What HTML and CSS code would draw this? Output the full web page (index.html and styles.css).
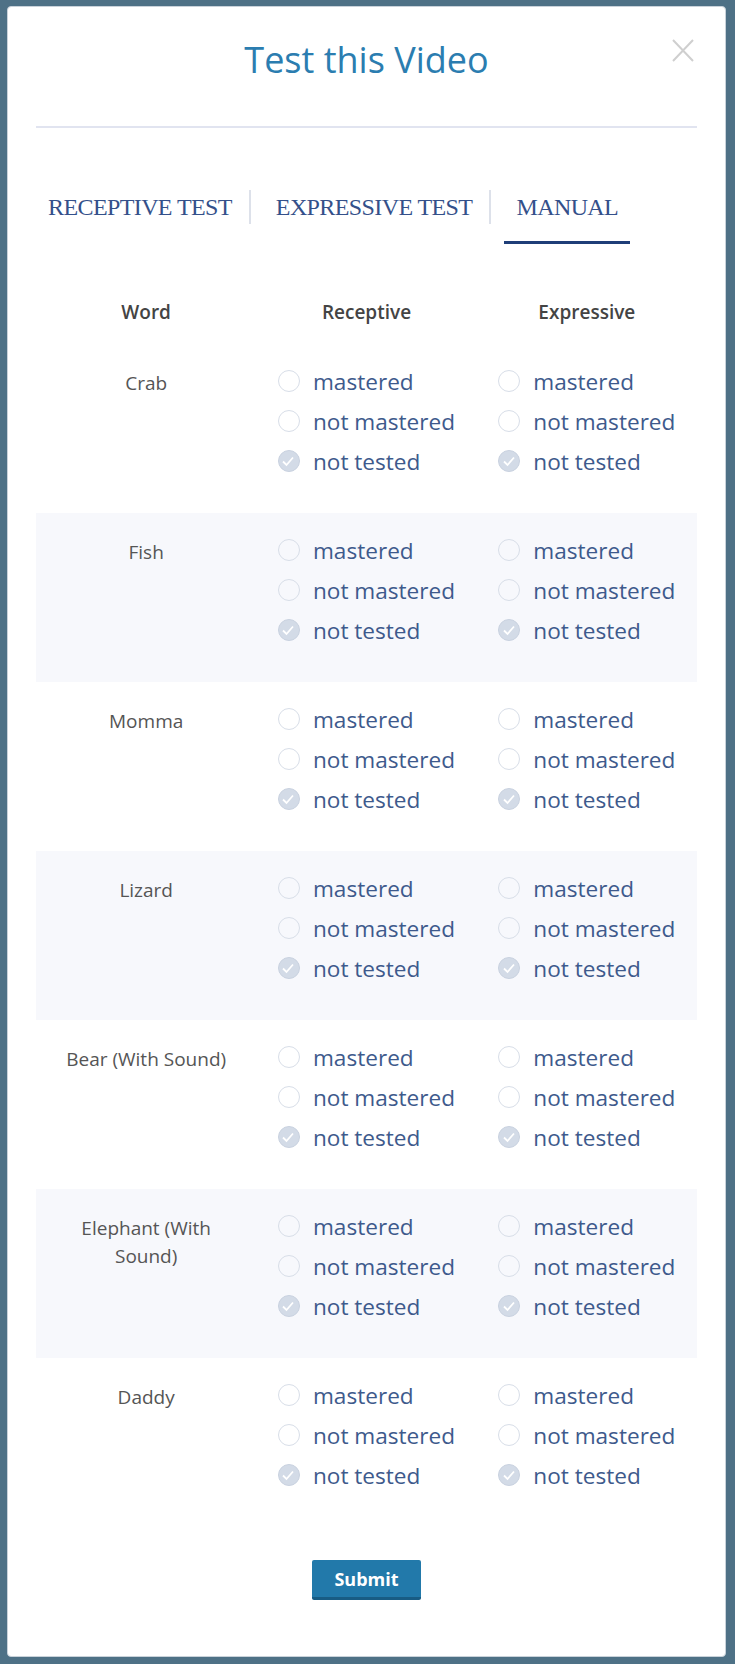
FILE: index.html
```html
<!DOCTYPE html>
<html lang="en">
<head>
  <meta charset="UTF-8">
  <meta name="viewport" content="width=device-width, initial-scale=1.0">
  <title>Test this Video</title>
  <link rel="stylesheet" href="styles.css">
</head>
<body>

<div class="modal">
  <button class="close" aria-label="Close">
    <svg width="22" height="23" viewBox="0 0 22 23"><path d="M1 1 L21 22 M21 1 L1 22" stroke="#cfcfcf" stroke-width="2" fill="none"/></svg>
  </button>

  <h2 class="title">Test this Video</h2>
  <hr class="divider">

  <div class="tabs">
    <span class="tab">Receptive Test</span>
    <span class="sep"></span>
    <span class="tab">Expressive Test</span>
    <span class="sep"></span>
    <span class="tab active">Manual</span>
  </div>

  <table class="manual">
    <thead>
      <tr>
        <th>Word</th>
        <th>Receptive</th>
        <th>Expressive</th>
      </tr>
    </thead>
    <tbody id="rows"></tbody>
  </table>

  <div class="actions">
    <button class="submit">Submit</button>
  </div>
</div>

<script>
  const words = ["Crab", "Fish", "Momma", "Lizard", "Bear (With Sound)", "Elephant (With Sound)", "Daddy"];
  const options = ["mastered", "not mastered", "not tested"];
  const check = '<svg width="22" height="22" viewBox="0 0 22 22"><path d="M6 11.5 L9.5 15 L16 7.5" stroke="#fff" stroke-width="1.8" fill="none"/></svg>';
  const tbody = document.getElementById('rows');

  function optionList() {
    let html = '<div class="options">';
    options.forEach((opt, i) => {
      const checked = i === 2; // everything starts as "not tested"
      html += '<label class="option"><span class="dot' + (checked ? ' checked' : '') + '">' +
        (checked ? check : '') + '</span>' + opt + '</label>';
    });
    return html + '</div>';
  }

  words.forEach(word => {
    const tr = document.createElement('tr');
    tr.innerHTML = '<td class="word">' + word + '</td>' +
      '<td>' + optionList() + '</td>' +
      '<td>' + optionList() + '</td>';
    tbody.appendChild(tr);
  });
</script>

</body>
</html>
```

FILE: styles.css
```css
body {
  margin: 0;
  padding: 6px 9px 7px 7px;
  background: #4e7186;
  font-family: "Open Sans", Arial, sans-serif;
}

.modal {
  position: relative;
  background: #fff;
  border: 1px solid #c9d2da;
  border-radius: 4px;
  padding: 32px 28px 57px;
  height: 1651px;
  box-sizing: border-box;
}

.close {
  position: absolute;
  top: 32px;
  right: 31px;
  padding: 0;
  border: none;
  background: none;
  cursor: pointer;
}

.title {
  margin: 0;
  text-align: center;
  font-size: 36px;
  font-weight: 400;
  line-height: 42px;
  color: #2b7db0;
}

.divider {
  margin: 45px 0 0;
  border: none;
  height: 2px;
  background: #e1e4f0;
}

.tabs {
  display: flex;
  align-items: flex-start;
  margin-top: 62px;
}

.tab {
  padding: 0 12px 17px;
  font-family: "Liberation Serif", "Times New Roman", serif;
  font-size: 24px;
  line-height: 34px;
  letter-spacing: -0.6px;
  text-transform: uppercase;
  color: #34508a;
  border-bottom: 3px solid transparent;
}

.tab.active {
  border-bottom-color: #1f3e78;
}

.sep {
  width: 2px;
  height: 34px;
  background: #dde1ea;
  margin: 0 13px 0 5px;
}

.manual {
  width: 100%;
  margin-top: 36px;
  border-collapse: collapse;
  table-layout: fixed;
}

.manual th {
  height: 64px;
  padding: 0;
  font-size: 19px;
  font-weight: 600;
  color: #444;
}

.manual tbody tr:nth-child(even) {
  background: #f7f8fc;
}

.manual td {
  vertical-align: top;
  text-align: center;
  padding: 17px 0 32px;
}

.manual td.word {
  padding: 25px 20px 0;
  font-size: 19px;
  line-height: 28px;
  color: #555;
}

.options {
  display: inline-block;
  text-align: left;
}

.option {
  display: flex;
  align-items: center;
  height: 40px;
  font-size: 22.6px;
  color: #3e5a8c;
  white-space: nowrap;
}

.dot {
  width: 22px;
  height: 22px;
  box-sizing: border-box;
  border: 1.5px solid #d8dee8;
  border-radius: 50%;
  margin-right: 13px;
  flex-shrink: 0;
}

.dot.checked {
  border: 1.5px solid #c9d2e0;
  background: #d3dbe7;
}

.dot svg {
  display: block;
  margin: -1.5px;
}

.actions {
  text-align: center;
  margin-top: 33px;
}

.submit {
  width: 109px;
  height: 40px;
  border: none;
  border-bottom: 3px solid #185c84;
  border-radius: 2px;
  background: #2279aa;
  color: #fff;
  font-family: "Open Sans", Arial, sans-serif;
  font-size: 18px;
  font-weight: 700;
  cursor: pointer;
}
```
